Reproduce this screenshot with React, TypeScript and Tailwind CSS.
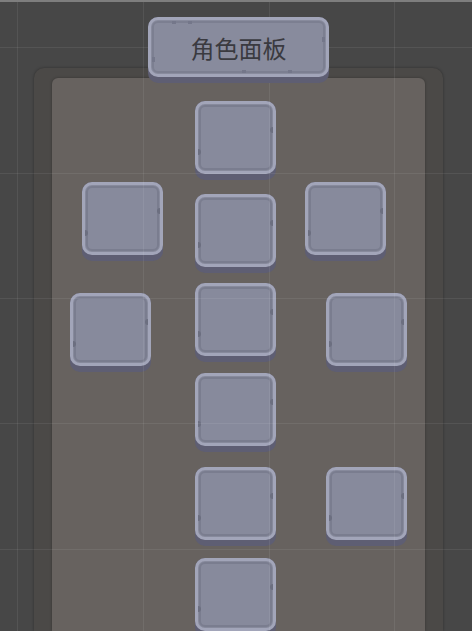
import React from "react";

function Slot({ className = "" }: { className?: string }) {
  return (
    <div className={`relative w-[81px] h-[79px] shrink-0 ${className}`}>
      <div className="h-[79px] rounded-[10px] bg-[#5e5e73]">
        <div className="h-[73px] rounded-[10px] border-[3px] border-[#a2a5b9] bg-[#878a9c] p-[1px]">
          <div className="relative h-full rounded-[6px] border-[2px] border-[#7a7d8f]">
            <span className="absolute right-[-3px] top-[20px] h-[6px] w-[3px] rounded-l-full bg-[#6c6f80]" />
            <span className="absolute left-[-3px] top-[42px] h-[6px] w-[3px] rounded-r-full bg-[#6c6f80]" />
          </div>
        </div>
      </div>
    </div>
  );
}

export default function App() {
  const vLines = [17, 143, 269, 394];
  const hLines = [47, 173, 298, 423, 549];
  return (
    <div className="relative w-[472px] h-[631px] overflow-hidden bg-[#474747]">
      <div className="h-[2px] bg-[#7e7e7e]" />
      <div className="pt-[15px]">
        {/* Title */}
        <div className="relative z-10 ml-[148px] w-[181px] h-[66px] rounded-[10px] bg-[#5e5e73]">
          <div className="h-[60px] rounded-[10px] border-[3px] border-[#a2a5b9] bg-[#888b9d] p-[1px]">
            <div className="relative flex h-full items-center justify-center rounded-[6px] border-[2px] border-[#7c7f91]">
              <span
                className="text-[24px] leading-none text-[#3a3a40] pt-[1px]"
                style={{ fontFamily: '"Noto Sans CJK SC", "Noto Sans", sans-serif' }}
              >
                角色面板
              </span>
              <span className="absolute left-[18px] top-[-2px] h-[3px] w-[4px] bg-[#74778a]" />
              <span className="absolute left-[34px] top-[-2px] h-[3px] w-[4px] bg-[#74778a]" />
              <span className="absolute right-[-2px] top-[14px] h-[5px] w-[3px] bg-[#74778a]" />
              <span className="absolute left-[-2px] top-[34px] h-[5px] w-[3px] bg-[#74778a]" />
              <span className="absolute left-[88px] bottom-[-2px] h-[3px] w-[4px] bg-[#74778a]" />
              <span className="absolute left-[134px] bottom-[-2px] h-[3px] w-[4px] bg-[#74778a]" />
            </div>
          </div>
        </div>
        {/* Outer panel */}
        <div className="ml-[34px] mt-[-15px] w-[409px] h-[563px] rounded-t-[10px] bg-[#4b4947] px-[18px] pt-[10px] shadow-[0_0_3px_rgba(0,0,0,0.35)]">
          <div className="flex h-full flex-col rounded-t-[6px] bg-[#67625f] pt-[23px] shadow-[0_0_3px_rgba(0,0,0,0.3)]">
            <div className="flex">
              <Slot className="ml-[143px]" />
            </div>
            <div className="mt-[2px] flex items-start">
              <Slot className="ml-[30px]" />
              <Slot className="ml-[32px] mt-[12px]" />
              <Slot className="ml-[29px]" />
            </div>
            <div className="flex items-start">
              <Slot className="ml-[18px] mt-[20px]" />
              <Slot className="ml-[44px] mt-[10px]" />
              <Slot className="ml-[50px] mt-[20px]" />
            </div>
            <div className="mt-[1px] flex">
              <Slot className="ml-[143px]" />
            </div>
            <div className="mt-[15px] flex">
              <Slot className="ml-[143px]" />
              <Slot className="ml-[50px]" />
            </div>
            <div className="mt-[12px] flex">
              <Slot className="ml-[143px]" />
            </div>
          </div>
        </div>
      </div>
      {/* Grid overlay */}
      <svg className="pointer-events-none absolute inset-0" width="472" height="631">
        {vLines.map((x) => (
          <line key={"v" + x} x1={x + 0.5} y1={2} x2={x + 0.5} y2={631} stroke="rgba(255,255,255,0.07)" strokeWidth={1} />
        ))}
        {hLines.map((y) => (
          <line key={"h" + y} x1={0} y1={y + 0.5} x2={472} y2={y + 0.5} stroke="rgba(255,255,255,0.07)" strokeWidth={1} />
        ))}
      </svg>
    </div>
  );
}
